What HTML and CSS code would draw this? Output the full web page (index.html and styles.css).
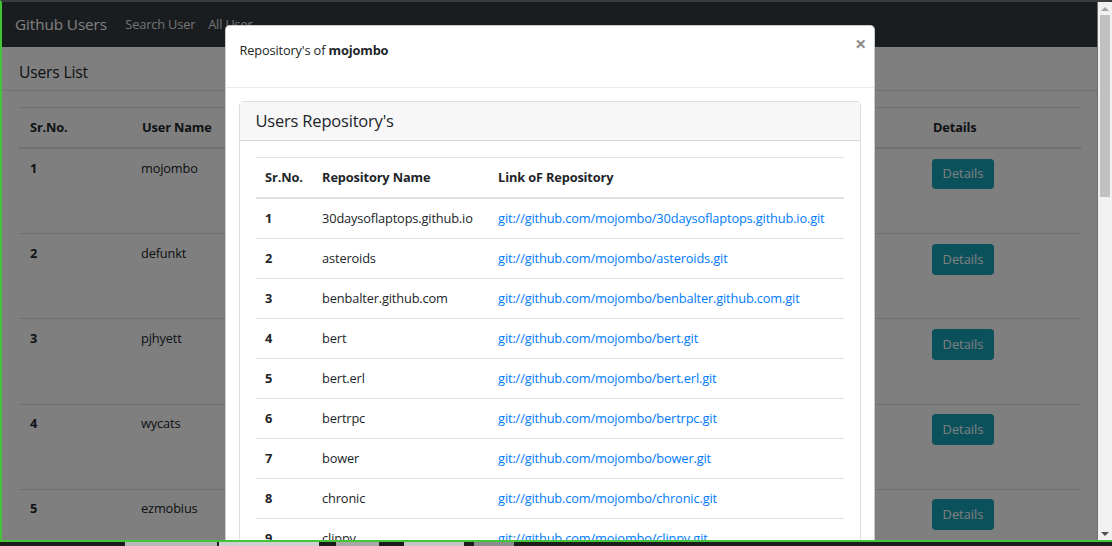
FILE: index.html
```html
<!DOCTYPE html>
<html lang="en">
<head>
<meta charset="utf-8">
<title>Github Users</title>
<link rel="stylesheet" href="styles.css">
</head>
<body>
<div class="window">
  <div class="page">
    <nav class="navbar">
      <span class="brand">Github Users</span>
      <a class="nav-link" href="#">Search User</a>
      <a class="nav-link" href="#">All User</a>
    </nav>
    <div class="users-head">Users List</div>
    <div class="users-body">
      <table class="utable">
        <colgroup><col class="c-sr"><col class="c-name"><col class="c-mid"><col class="c-det"></colgroup>
        <thead>
          <tr><th>Sr.No.</th><th>User Name</th><th></th><th>Details</th></tr>
        </thead>
        <tbody>
          <tr><td>1</td><td class="nm">mojombo</td><td><div class="avatar"></div></td><td><button class="btn-info">Details</button></td></tr>
          <tr><td>2</td><td class="nm">defunkt</td><td><div class="avatar"></div></td><td><button class="btn-info">Details</button></td></tr>
          <tr><td>3</td><td class="nm">pjhyett</td><td><div class="avatar"></div></td><td><button class="btn-info">Details</button></td></tr>
          <tr><td>4</td><td class="nm">wycats</td><td><div class="avatar"></div></td><td><button class="btn-info">Details</button></td></tr>
          <tr><td>5</td><td class="nm">ezmobius</td><td><div class="avatar"></div></td><td><button class="btn-info">Details</button></td></tr>
          <tr><td>6</td><td class="nm">ivey</td><td><div class="avatar"></div></td><td><button class="btn-info">Details</button></td></tr>
        </tbody>
      </table>
    </div>
  </div>

  <div class="backdrop"></div>

  <div class="modal">
    <div class="dialog">
      <div class="m-header">
        <p class="m-title">Repository's of <b>mojombo</b></p>
        <button class="close" aria-label="Close">&times;</button>
      </div>
      <div class="m-body">
        <div class="card">
          <div class="card-header">Users Repository's</div>
          <div class="card-body">
            <table class="rtable">
              <colgroup><col class="r-sr"><col class="r-name"><col class="r-link"></colgroup>
              <thead>
                <tr><th>Sr.No.</th><th>Repository Name</th><th>Link oF Repository</th></tr>
              </thead>
              <tbody>
                <tr><td>1</td><td>30daysoflaptops.github.io</td><td><a href="#">git://github.com/mojombo/30daysoflaptops.github.io.git</a></td></tr>
                <tr><td>2</td><td>asteroids</td><td><a href="#">git://github.com/mojombo/asteroids.git</a></td></tr>
                <tr><td>3</td><td>benbalter.github.com</td><td><a href="#">git://github.com/mojombo/benbalter.github.com.git</a></td></tr>
                <tr><td>4</td><td>bert</td><td><a href="#">git://github.com/mojombo/bert.git</a></td></tr>
                <tr><td>5</td><td>bert.erl</td><td><a href="#">git://github.com/mojombo/bert.erl.git</a></td></tr>
                <tr><td>6</td><td>bertrpc</td><td><a href="#">git://github.com/mojombo/bertrpc.git</a></td></tr>
                <tr><td>7</td><td>bower</td><td><a href="#">git://github.com/mojombo/bower.git</a></td></tr>
                <tr><td>8</td><td>chronic</td><td><a href="#">git://github.com/mojombo/chronic.git</a></td></tr>
                <tr><td>9</td><td>clippy</td><td><a href="#">git://github.com/mojombo/clippy.git</a></td></tr>
                <tr><td>10</td><td>conceptual_algorithms</td><td><a href="#">git://github.com/mojombo/conceptual_algorithms.git</a></td></tr>
                <tr><td>11</td><td>cubesmash</td><td><a href="#">git://github.com/mojombo/cubesmash.git</a></td></tr>
                <tr><td>12</td><td>dotjs</td><td><a href="#">git://github.com/mojombo/dotjs.git</a></td></tr>
                <tr><td>13</td><td>egotron</td><td><a href="#">git://github.com/mojombo/egotron.git</a></td></tr>
                <tr><td>14</td><td>ernie</td><td><a href="#">git://github.com/mojombo/ernie.git</a></td></tr>
                <tr><td>15</td><td>fixture-scenarios</td><td><a href="#">git://github.com/mojombo/fixture-scenarios.git</a></td></tr>
              </tbody>
            </table>
          </div>
        </div>
      </div>
      <div class="m-footer"><button class="btn-secondary">Close</button></div>
    </div>
  </div>

  <div class="vscroll" aria-hidden="true">
    <div class="sb-btn"><span class="arrow-up"></span></div>
    <div class="sb-track"><div class="sb-thumb"></div></div>
    <div class="sb-btn"><span class="arrow-down"></span></div>
  </div>
</div>
<div class="taskbar">
  <span class="tb tb1"></span><span class="tb tb2"></span><span class="tb tb3"></span><span class="tb tb4"></span><span class="tb tb5"></span>
</div>
</body>
</html>
```

FILE: styles.css
```css
* { box-sizing: border-box; }
html, body { margin: 0; padding: 0; }
body {
  background: #1c1c1c;
  font-family: "Open Sans", "Noto Sans", sans-serif;
  font-size: 12.8px;
  letter-spacing: -0.15px;
  line-height: 19px;
  color: #212529;
  width: 1112px;
  height: 546px;
  overflow: hidden;
}

.window {
  position: relative;
  height: 542px;
  border-top: 2px solid #3a3d40;
  border-left: 2px solid #45c43a;
  border-bottom: 2px solid #45c43a;
  overflow: hidden;
  background: #fff;
}

/* ---------- page underneath ---------- */
.page { width: 100%; }
.navbar {
  height: 45px;
  background: #343a40;
  display: flex;
  align-items: center;
  padding: 0 13px;
}
.brand {
  color: #fff;
  font-size: 15.3px;
  letter-spacing: -0.1px;
  margin-right: 12px;
  line-height: 24px;
  margin-top: -1px;
}
.nav-link {
  color: rgba(255,255,255,.9);
  text-decoration: none;
  padding: 0 6.4px;
  margin-top: -1px;
}
.users-head {
  font-size: 15.6px;
  line-height: 19px;
  padding: 16px 17px 8px;
  border-bottom: 1px solid #dee2e6;
}
.users-body { padding: 16px 31px 0 17px; }
.utable {
  width: 100%;
  border-collapse: collapse;
  table-layout: fixed;
}
.c-sr { width: 112px; }
.c-name { width: 200px; }
.c-det { width: 159px; }
.utable th, .utable td {
  text-align: left;
  vertical-align: top;
  padding: 9.6px 11px;
  border-top: 1px solid #dee2e6;
}
.utable th { padding: 10px 11px; }
.utable thead th { border-bottom: 2px solid #dee2e6; }
.utable td:first-child, .utable th { font-weight: 700; }
.utable td.nm { font-weight: 400; padding-left: 10px; }
.avatar { height: 65px; }
.btn-info {
  font: inherit;
  color: #fff;
  background: #17a2b8;
  border: 1px solid #17a2b8;
  border-radius: 3.2px;
  padding: 4.8px 9.6px;
  line-height: 19.2px;
  margin-left: -1px;
}

/* ---------- backdrop + modal ---------- */
.backdrop {
  position: absolute;
  inset: 0;
  background: rgba(0,0,0,.5);
}
.modal {
  position: absolute;
  top: 0;
  left: 0;
  bottom: 0;
  right: 15px;
  overflow: hidden;
}

.dialog {
  width: 650px;
  margin: 23px auto 25px;
  background: #fff;
  border: 1px solid rgba(0,0,0,.2);
  border-radius: 4.8px;
}
.m-header {
  display: flex;
  justify-content: space-between;
  align-items: flex-start;
  padding: 15px 14px 14px;
  border-bottom: 1px solid #e9ecef;
}
.m-title { margin: 0 0 13px; }
.close {
  background: none;
  border: 0;
  padding: 0;
  font-family: "Open Sans", sans-serif;
  font-size: 20px;
  font-weight: 700;
  line-height: 20px;
  color: #000;
  opacity: .45;
  margin: -7px -7px 0 0;
}
.m-body { padding: 13px; }
.card {
  border: 1px solid rgba(0,0,0,.125);
  border-radius: 4px;
}
.card-header {
  background: #f7f7f7;
  border-bottom: 1px solid rgba(0,0,0,.125);
  padding: 8px 16px;
  font-size: 16.5px;
  letter-spacing: -0.2px;
  line-height: 22px;
}
.card-body { padding: 16px; }
.rtable {
  width: 100%;
  border-collapse: collapse;
  table-layout: fixed;
}
.r-sr { width: 57px; }
.r-name { width: 176px; }
.rtable th, .rtable td {
  text-align: left;
  padding: 10px 9.6px;
  line-height: 19px;
  border-top: 1px solid #dee2e6;
  white-space: nowrap;
}
.rtable thead th {
  padding: 10px 9.6px 10px;
  border-bottom: 2px solid #dee2e6;
  font-weight: 700;
}
.rtable td:first-child { font-weight: 700; }
.rtable a { color: #007bff; text-decoration: none; }
.m-footer {
  display: flex;
  justify-content: flex-end;
  padding: 13px;
  border-top: 1px solid #e9ecef;
}
.btn-secondary {
  font: inherit;
  color: #fff;
  background: #6c757d;
  border: 1px solid #6c757d;
  border-radius: 3.2px;
  padding: 4.8px 9.6px;
}

/* ---------- modal scrollbar ---------- */
.vscroll {
  position: absolute;
  top: 0;
  right: 0;
  bottom: 0;
  width: 15px;
  background: #f1f1f1;
  border-left: 1px solid #6e6e6e;
  display: flex;
  flex-direction: column;
}
.sb-btn {
  height: 13px;
  display: flex;
  align-items: center;
  justify-content: center;
  flex: none;
}
.arrow-up {
  width: 0; height: 0;
  border-left: 4px solid transparent;
  border-right: 4px solid transparent;
  border-bottom: 4px solid #a3a3a3;
}
.arrow-down {
  width: 0; height: 0;
  border-left: 4px solid transparent;
  border-right: 4px solid transparent;
  border-top: 4px solid #505050;
}
.sb-track { flex: 1; padding: 0 2px; }
.sb-thumb { height: 182px; background: #c1c1c1; }

/* ---------- taskbar strip ---------- */
.taskbar {
  height: 4px;
  display: flex;
  background: #1c1c1c;
}
.tb { display: block; height: 4px; background: #9a9a9a; }
.tb1 { margin-left: 125px; width: 92px; background: #b8b8b8; }
.tb2 { margin-left: 2px; width: 100px; background: #d0d0d0; }
.tb3 { margin-left: 17px; width: 43px; background: #a8a8a8; }
.tb4 { margin-left: 25px; width: 60px; background: #c4c4c4; }
.tb5 { margin-left: 10px; width: 40px; background: #8c8c8c; }
```
